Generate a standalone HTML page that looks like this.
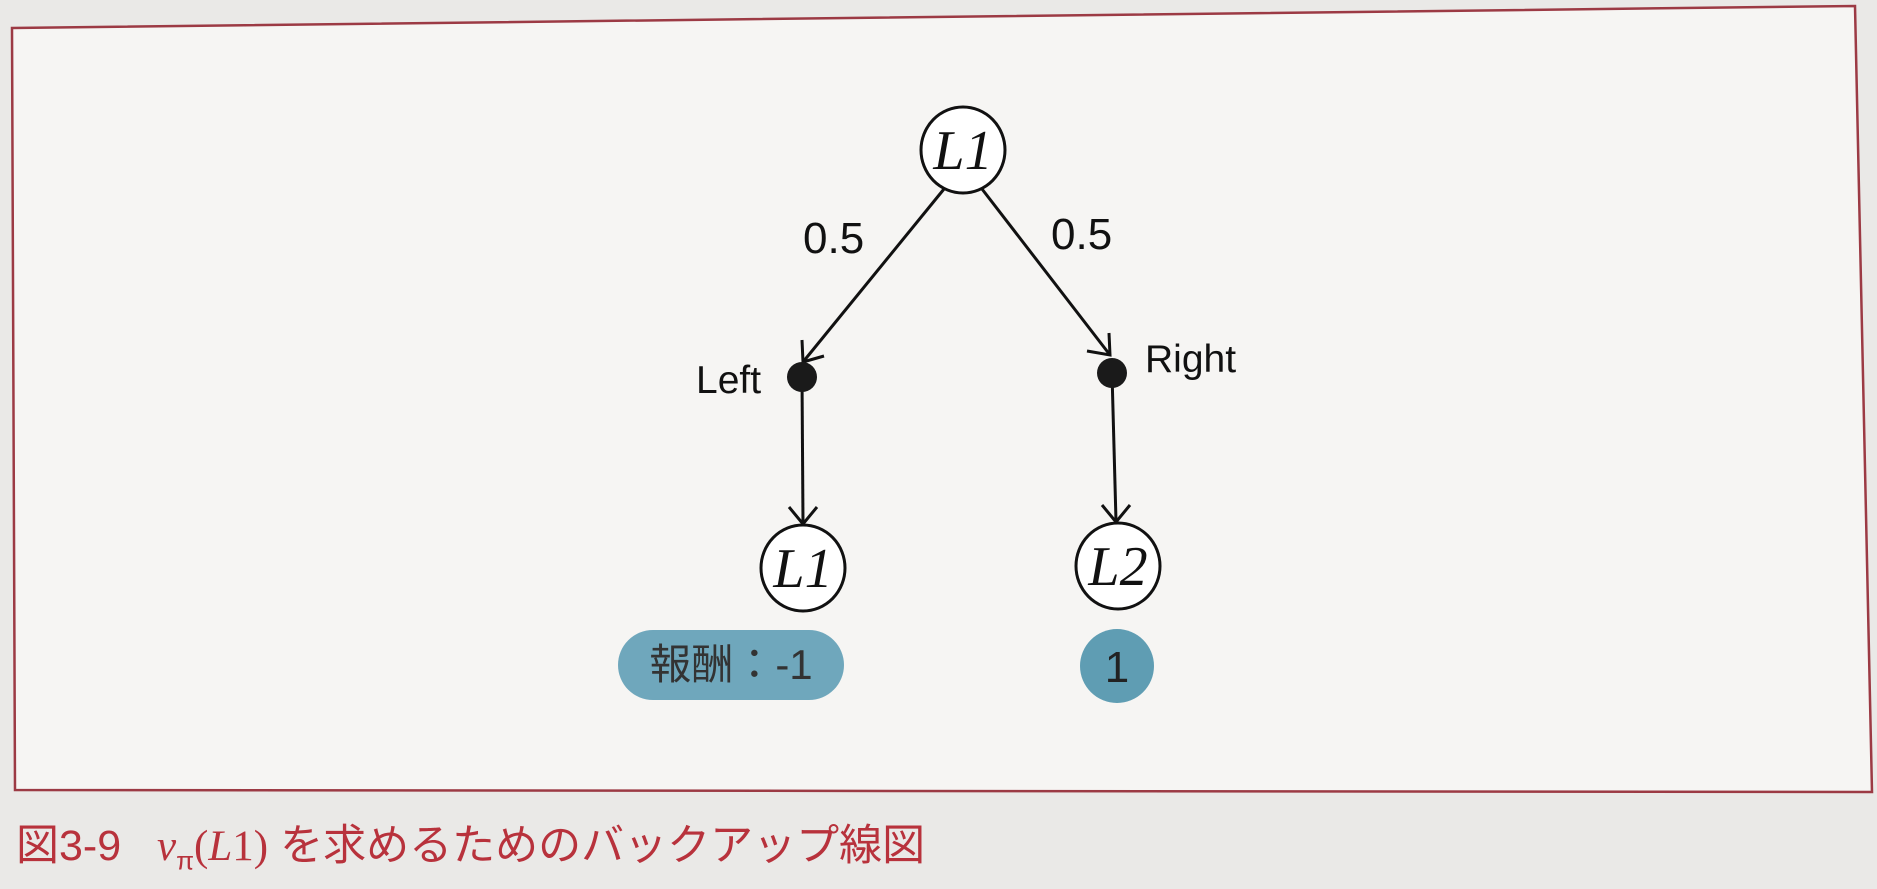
<!DOCTYPE html>
<html><head><meta charset="utf-8"><style>
html,body{margin:0;padding:0;width:1877px;height:871px;overflow:hidden;background:#eae9e7;}
svg{position:absolute;left:0;top:0}
.cap{position:absolute;left:16px;top:818px;font-family:"Liberation Sans","Noto Sans CJK JP",sans-serif;font-size:43px;line-height:56px;color:#b8323c;white-space:nowrap}
.cap i{font-family:"Liberation Serif",serif}
</style></head><body>
<svg width="1877" height="871" viewBox="0 0 1877 871">
<rect x="0" y="0" width="1877" height="871" fill="#eae9e7"/>
<polygon points="12,28 1855,6 1872,792 15,790" fill="#f6f5f3" stroke="#9c3a44" stroke-width="2.5"/>
<g stroke="#111" stroke-width="3" fill="none">
<line x1="944" y1="189" x2="803" y2="362"/>
<line x1="982" y1="189" x2="1110" y2="355"/>
<polyline points="802,340 803,362 824,356"/>
<polyline points="1087,351 1110,355 1109,333"/>
<line x1="802" y1="377" x2="803" y2="523"/>
<polyline points="789,507 803,524 817,507"/>
<line x1="1112" y1="373" x2="1116" y2="521"/>
<polyline points="1102,505 1116,522 1130,505"/>
</g>
<g fill="#fff" stroke="#111" stroke-width="3">
<ellipse cx="963" cy="150" rx="42" ry="43"/>
<ellipse cx="803" cy="568" rx="42" ry="43"/>
<ellipse cx="1118" cy="566" rx="42" ry="43"/>
</g>
<circle cx="802" cy="377" r="15" fill="#1a1a1a"/>
<circle cx="1112" cy="373" r="15" fill="#1a1a1a"/>
<g font-family="Liberation Serif,serif" font-style="italic" font-size="56" text-anchor="middle" fill="#111">
<text x="963" y="169">L1</text><text x="803" y="587">L1</text><text x="1118" y="585">L2</text>
</g>
<g font-family="Liberation Sans,sans-serif" fill="#111">
<text x="803" y="253" font-size="44">0.5</text><text x="1051" y="249" font-size="44">0.5</text>
<text x="696" y="393" font-size="39">Left</text><text x="1145" y="372" font-size="39">Right</text>
</g>
<rect x="618" y="630" width="226" height="70" rx="35" fill="#6fa7bc"/>
<circle cx="1117" cy="666" r="37" fill="#5f9db3"/>
<text x="731" y="679" text-anchor="middle" font-family="Liberation Sans,'Noto Sans CJK JP',sans-serif" font-size="42" fill="#333">報酬：-1</text>
<text x="1117" y="682" text-anchor="middle" font-family="Liberation Sans,sans-serif" font-size="44" fill="#222">1</text>
</svg>
<div class="cap">図3-9&nbsp;&nbsp; <i>v</i><sub style="font-size:26px">π</sub><span style="font-family:'Liberation Serif',serif">(<i>L</i>1)</span> を求めるためのバックアップ線図</div>
</body></html>
